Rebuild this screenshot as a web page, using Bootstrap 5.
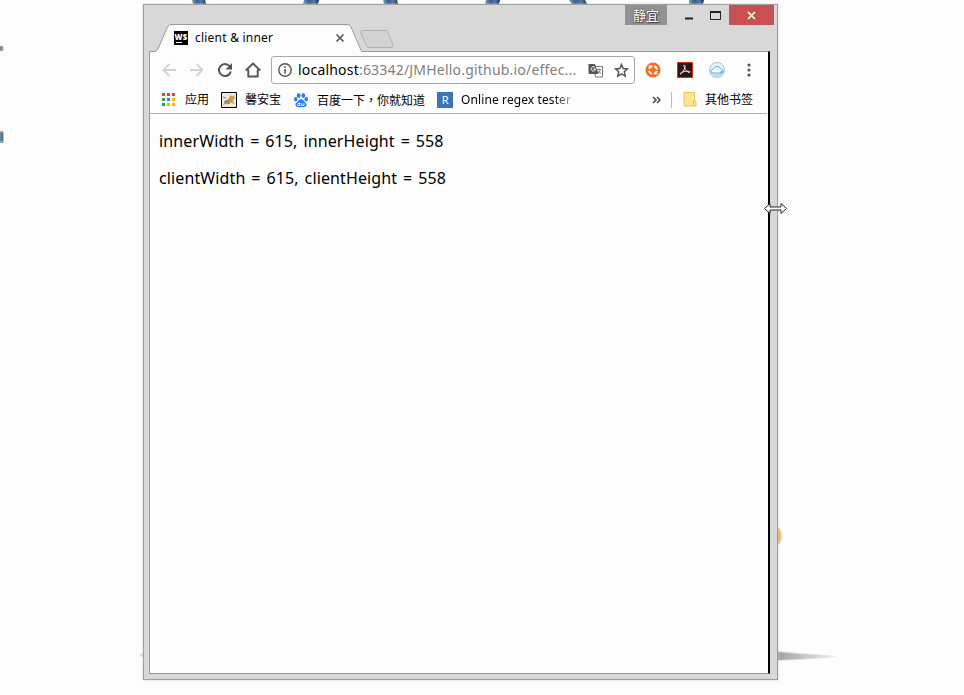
<!DOCTYPE html>
<html lang="zh-CN">
<head>
<meta charset="utf-8">
<title>client &amp; inner</title>
<link href="https://cdn.jsdelivr.net/npm/bootstrap@5.3.0/dist/css/bootstrap.min.css" rel="stylesheet">
<style>
html,body{height:100%}
body{background:#fdfdfd;color:#000;overflow:hidden;font-family:"Noto Sans","Noto Sans CJK SC",sans-serif}
svg{display:block;flex:none}
.desktop{width:964px;height:695px}
.wallpaper,.win,.pointer{position:absolute}
.wallpaper{left:0;top:0}
.win{left:143px;top:4px;width:635px;height:676px;background:#d8d8d8;border:1px solid #a0a0a0;box-shadow:0 0 2px #ccc;padding:0 7px 5px 5px}
.pointer{left:763px;top:202px}
.strip{height:46px;width:621px}
.tabshape{width:213px;height:28px;margin-top:19px}
.tabshape>svg{position:absolute;left:0;top:0}
.tab-face{height:28px;padding-left:25px;padding-right:17px}
.tab-label{font-size:12px;margin-left:7px;letter-spacing:.22px}
.newtab{margin:25px 0 0 -3px}
.user-tag{width:42px;height:20px;background:#929292;color:#fff;font-size:13px;line-height:20px;text-shadow:0 0 2px #333,1px 1px 1px #444;margin-right:8px}
.ctl{width:27px;height:20px}
.shut{width:45px;background:#c75050;margin-right:-4px}
.inside{border:1px solid #999;border-right:2px solid #000;background:#fdfdfd;width:621px}
.bar{height:36px;padding-left:5px}
.tool{width:28px}
.ext{width:32px}
.omni{width:364px;height:28px;border:1px solid #a9a9a9;border-radius:3px;background:#fff;margin:0 2px 0 4px;padding:0 5px 0 6px}
.addr{font-size:14px;width:290px;color:#808080;letter-spacing:.2px;margin-left:6px;padding-bottom:2px}
.addr b{font-weight:400;color:#000}
.marks{height:26px;border-bottom:1px solid #b0b0b0;font-size:12px;padding:0 14px 2px 11px;margin-right:1px}
.mk{height:18px;line-height:18px}
.apps-label{margin-left:9px}
.tc{font-family:"Noto Sans CJK TC",sans-serif}
.r-icon{width:16px;height:16px;background:#3d74b8;color:#fff;line-height:16px;font-size:11px}
.fade-label{background:linear-gradient(90deg,#000 85%,#bbb);-webkit-background-clip:text;background-clip:text;color:transparent;letter-spacing:.1px}
.sep{width:1px;height:16px;background:#bbb;margin:0 11px 0 10px}
.page{font-size:16px;padding:15px 9px;letter-spacing:.12px;word-spacing:1.6px}
.page p{line-height:24px;margin-bottom:13px}
</style>
<script src="https://cdn.jsdelivr.net/npm/bootstrap@5.3.0/dist/js/bootstrap.bundle.min.js"></script>
</head>
<body>
<div class="desktop position-relative overflow-hidden">
<svg class="wallpaper" width="964" height="695">
<defs>
<linearGradient id="leg"><stop offset="0" stop-color="#78a0c0"/><stop offset=".35" stop-color="#365f8c"/><stop offset=".7" stop-color="#4b7ba5"/><stop offset="1" stop-color="#152c50"/></linearGradient>
<linearGradient id="shade"><stop offset="0" stop-color="#a2a2a2"/><stop offset="1" stop-color="#eee"/></linearGradient>
<radialGradient id="ball" cx=".4" cy=".5" r=".6"><stop offset="0" stop-color="#d98f36"/><stop offset=".7" stop-color="#f0b25c"/><stop offset="1" stop-color="#fbe6b8"/></radialGradient>
</defs>
<g fill="url(#leg)"><path d="M192 0h13l1 4h-13z"/><path d="M304 0h15l-1 4h-15z"/><path d="M383 0h14l1 4h-14z"/><path d="M486 0h14l-1 4h-14z"/><path d="M569 0h16l2 4h-15z"/><path d="M689 0h15l-1 4h-14z"/></g>
<path d="M0 46h3v5H0z" fill="#999"/><path d="M0 47h2v2H0z" fill="#6f82b8"/><path d="M3 47h1v3H3z" fill="#ddd"/>
<path d="M0 131h3v12H0z" fill="#a49c98"/><path d="M0 133h2v8H0z" fill="#2f8de0"/><path d="M2 133h1v8H2z" fill="#8b6039"/><path d="M3 132h1v11H3z" fill="#bbb"/>
<ellipse cx="776" cy="536" rx="6" ry="10" fill="url(#ball)"/>
<path d="M778 651l22 2 36 3v1l-36 3-22 1z" fill="#e4e4e4"/><path d="M778 652l22 2 34 2v1l-34 2-22 1z" fill="url(#shade)"/>
<circle cx="142" cy="655" r="2" fill="#ddd"/>
</svg>

<div class="win d-flex flex-column">
  <div class="strip d-flex align-items-start">
    <div class="tabshape position-relative">
      <svg width="213" height="28"><path d="M1 28V27.500H5Q8 27.500 9.500 24L18 4Q19.500.5 22 .5H198Q201 .5 202 3L211 24Q212 27.500 213 27.500V28z" fill="#fdfdfd"/><path d="M1 27.500H5Q8 27.500 9.500 24L18 4Q19.500.5 22 .5H198Q201 .5 202 3L211 24Q212 27.500 213 27.500" fill="none" stroke="#999"/></svg>
      <div class="tab-face position-relative d-flex align-items-center">
        <svg width="14" height="14"><path d="M0 0h14v14H0z"/><path d="M2 11.500h6" stroke="#fff"/><text x=".6" y="8.800" font-family="Open Sans,sans-serif" font-size="9" font-weight="800" fill="#fff" textLength="12.500" lengthAdjust="spacingAndGlyphs">WS</text></svg>
        <span class="tab-label">client &amp; inner</span>
        <svg class="ms-auto" width="10" height="10"><path d="M1.500 1.500l7 7m0-7l-7 7" stroke="#555" stroke-width="1.600"/></svg>
      </div>
    </div>
    <svg class="newtab" width="36" height="20"><path d="M3.500.5H27Q28.500.5 29 2L34 15Q34.500 17.500 33 17.500H10Q8 17.500 7.500 16L2 3Q1.500.5 3.500.5z" fill="#d3d3d3" stroke="#b0b0b0"/></svg>
    <div class="d-flex ms-auto">
      <div class="user-tag text-center">静宜</div>
      <div class="ctl d-flex align-items-center justify-content-center"><svg width="10" height="12"><path d="M1 9.500h8" stroke="#222" stroke-width="2"/></svg></div>
      <div class="ctl d-flex align-items-center justify-content-center"><svg width="11" height="9"><path d="M.5 1v7.500h10V1" fill="none" stroke="#222"/><path d="M0 1h11" stroke="#222" stroke-width="2"/></svg></div>
      <div class="ctl shut d-flex align-items-center justify-content-center"><svg width="9" height="9"><path d="M1 1l7 7m0-7l-7 7" stroke="#fff" stroke-width="1.700"/></svg></div>
    </div>
  </div>

  <div class="inside flex-grow-1">
    <div class="bar d-flex align-items-center">
      <div class="tool d-flex justify-content-center"><svg width="14" height="14"><path d="M14 7H1.500M7.500 1l-6 6 6 6" fill="none" stroke="#d2d2d2" stroke-width="1.800"/></svg></div>
      <div class="tool d-flex justify-content-center"><svg width="14" height="14"><path d="M0 7h12.500M6.500 1l6 6-6 6" fill="none" stroke="#d2d2d2" stroke-width="1.800"/></svg></div>
      <div class="tool d-flex justify-content-center"><svg width="16" height="16"><path d="M12.600 4.200A6 6 0 1 0 13.800 9.500" fill="none" stroke="#555" stroke-width="2"/><path d="M15 1v6.500H8.500z" fill="#555"/></svg></div>
      <div class="tool d-flex justify-content-center"><svg width="16" height="16"><path d="M.8 8.500L8 1.500l7.200 7M3.300 7.500V14.500h9.400V7.500" fill="none" stroke="#555" stroke-width="1.900"/></svg></div>
      <div class="omni d-flex align-items-center">
        <svg width="14" height="14"><circle cx="7" cy="7" r="6.200" fill="none" stroke="#555" stroke-width="1.400"/><path d="M7 6v4.500M7 3.300v1.600" stroke="#555" stroke-width="1.600"/></svg>
        <span class="addr text-nowrap"><b>localhost</b>:63342/JMHello.github.io/effec...</span>
        <svg width="15" height="15"><path d="M6 3.500h8.500v10.500H7.500z" fill="#fff" stroke="#777"/><path d="M1 1h6l3.500 10H1.500Q.5 11 .5 10V1.500z" fill="#555"/><path d="M7 4.500A2.200 2.200 0 1 0 7.500 6H5.200" fill="none" stroke="#fff"/><path d="M8.500 6.500h4.500m-2-1.200v1.200m1.500 0q-.5 2.500-3 4m.5-3q1 2.200 3 3" fill="none" stroke="#777" stroke-width=".9"/></svg>
        <svg class="ms-auto" width="15" height="15"><path d="M7.500 1.500l1.750 4 4.250.4-3.200 2.900.95 4.300-3.750-2.250-3.750 2.250.95-4.300L1.500 5.900l4.250-.4z" fill="none" stroke="#555" stroke-width="1.500"/></svg>
      </div>
      <div class="ext d-flex justify-content-center"><svg width="16" height="16"><circle cx="8" cy="8" r="7.600" fill="#f36f24"/><circle cx="8" cy="8" r="4" fill="none" stroke="#fff" stroke-width="1.900" stroke-dasharray="4.200 2.080" stroke-dashoffset="-1"/><path d="M3.200 4.500L4.500 3.200M11.500 12.800l1.300-1.300" stroke="#fff"/></svg></div>
      <div class="ext d-flex justify-content-center"><svg width="16" height="16"><path d="M.5.500h15v15H.5z" fill="#2b1517" stroke="#dc2a12"/><path d="M7.300 3q1.500 0 .5 3-1 3-3.500 5.500-1 1-1.300.3.300-1.500 5-2.500 4-.5 5 .5 0 1.200-2 .4Q8 8 7 4.500q-.3-1.500.3-1.500z" fill="none" stroke="#e8dedd" stroke-width="1"/></svg></div>
      <div class="ext d-flex justify-content-center"><svg width="16" height="16"><circle cx="8" cy="8" r="7.500" fill="#e8f3fa" stroke="#b5bfc5"/><path d="M1 9.500h14a7 7 0 0 1-14 0z" fill="#b9e0f3"/><path d="M4 11q-2-.3-2-2t2.300-2q1-2.700 3.700-2.700T11.700 7q2.500.2 2.500 2T12 11z" fill="#f4fbff" stroke="#62b5df"/><circle cx="12.500" cy="10" r="1" fill="#29a2ec"/></svg></div>
      <div class="ext d-flex justify-content-center"><svg width="4" height="14"><g fill="#555"><circle cx="2" cy="2" r="1.600"/><circle cx="2" cy="7" r="1.600"/><circle cx="2" cy="12" r="1.600"/></g></svg></div>
    </div>
    <div class="marks d-flex align-items-center text-nowrap">
      <svg width="15" height="14"><path d="M1 0h3v3H1zM6 0h3v3H6zM11 0h3v3h-3z" fill="#ea4335"/><path d="M1 5h3v3H1zM1 10h3v3H1z" fill="#2e9e58"/><path d="M6 5h3v3H6z" fill="#2a83f0"/><path d="M11 5h3v3h-3zM6 10h3v3H6zM11 10h3v3h-3z" fill="#f8b400"/></svg>
      <span class="mk apps-label me-2">应用</span>
      <svg class="ms-1 me-2" width="16" height="16"><path d="M.5.500h15v15H.5z" fill="#eeeae0" stroke="#000"/><path d="M7 9l1-3 1-3 2 1.500 2.500-1.500v4l-2 2 2.500 3-4-1z" fill="#d09a48"/><path d="M2 13l3-5 3-1 2 3-3 1z" fill="#a08a60"/><path d="M2 5l3 1M3 10l2-1M6 12l3-1" fill="none" stroke="#777"/></svg>
      <span class="mk me-2">馨安宝</span>
      <svg class="ms-1 me-2" width="16" height="16"><g fill="#2f80ea"><ellipse cx="5.700" cy="3.500" rx="1.900" ry="2.600"/><ellipse cx="10.300" cy="3.500" rx="1.900" ry="2.600"/><ellipse cx="2.700" cy="7.300" rx="1.800" ry="2.300"/><ellipse cx="13.300" cy="7.300" rx="1.800" ry="2.300"/><path d="M8 7q1.600 0 2.700 1.800 1 1.300 2.300 2.200 1 1.400.2 3Q12.300 15.500 8 15.200 3.700 15.500 2.800 14 2 12.400 3 11q1.300-.9 2.300-2.200Q6.400 7 8 7z"/></g><path d="M6.800 10.500v3H5.500q-1 0-1-1t1-1h1.300M8.700 11.300v2.200h2.200v-2.200" fill="none" stroke="#fff" stroke-width=".9"/></svg>
      <span class="mk me-2">百度一下<span class="tc" lang="zh-TW">，</span>你就知道</span>
      <span class="r-icon text-center ms-1 me-2">R</span>
      <span class="mk fade-label">Online regex tester</span>
      <svg class="ms-auto" width="9" height="8"><path d="M1 1l3 3-3 3M5 1l3 3-3 3" fill="none" stroke="#444" stroke-width="1.500"/></svg>
      <span class="sep"></span>
      <svg class="me-2" width="14" height="15"><path d="M1 .5h10.500v9H13v4.500H1z" fill="#ffe693" stroke="#e6c455"/><path d="M10.500 14V9.500" stroke="#e6c455"/></svg>
      <span class="mk ps-0">其他书签</span>
    </div>
    <div class="page">
      <p>innerWidth = 615, innerHeight = 558</p>
      <p>clientWidth = 615, clientHeight = 558</p>
    </div>
  </div>
</div>

<svg class="pointer" width="26" height="13"><path d="M1.500 6.500L7 1.500V5h11V1.500l5.500 5L18 11.500V8H7v3.500z" fill="#fff" stroke="#222"/></svg>
</div>
</body>
</html>
